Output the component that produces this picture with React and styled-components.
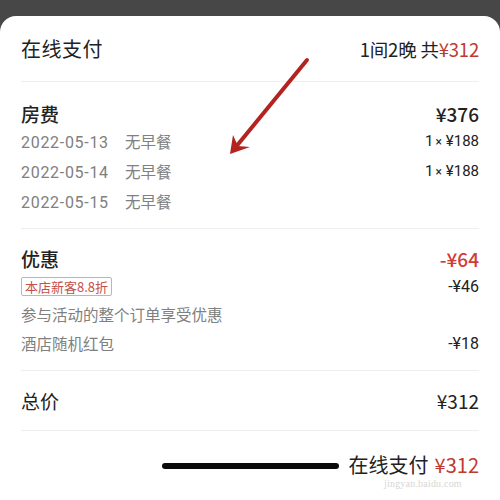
import styled, { createGlobalStyle } from 'styled-components'

const Global = createGlobalStyle`
  html, body {
    margin: 0;
    padding: 0;
    background: #474747;
  }
  body {
    font-family: "Noto Sans CJK SC", "Noto Sans", sans-serif;
    color: #222;
  }
`

const Screen = styled.div`
  position: relative;
  width: 500px;
  height: 500px;
  overflow: hidden;
  padding-top: 16px;
  box-sizing: border-box;
`

const Sheet = styled.div`
  height: 484px;
  background: #fff;
  border-radius: 16px 16px 0 0;
  padding: 0 21px 0 21px;
  box-sizing: border-box;
`

const Header = styled.div`
  height: 65px;
  display: flex;
  align-items: center;
  justify-content: space-between;
`

const HeaderTitle = styled.div`
  font-size: 20px;
  letter-spacing: 0.5px;
`

const HeaderSummary = styled.div`
  font-size: 18.5px;
  letter-spacing: -0.2px;
`

const Red = styled.span`
  color: #c0392f;
`

const Divider = styled.div`
  height: 1px;
  background: #eeeeee;
`

const Section = styled.div`
  padding: ${p => p.$pad || '18px 0 12px'};
`

const TitleRow = styled.div`
  height: 26px;
  display: flex;
  align-items: center;
  justify-content: space-between;
  font-size: 19px;
  font-weight: ${p => p.$light ? 400 : 500};
`

const Amount = styled.span`
  font-size: 19px;
  font-weight: ${p => p.$light ? 400 : 500};
  color: ${p => p.$red ? '#cf3b36' : '#222'};
`

const Row = styled.div`
  height: ${p => p.$h || 30}px;
  display: flex;
  align-items: center;
  justify-content: space-between;
`

const Gray = styled.span`
  font-size: 15.5px;
  color: #808080;
`

const DateText = styled.span`
  display: inline-block;
  width: 104px;
  font-size: 16px;
  letter-spacing: 0.7px;
  font-family: "Roboto", "Noto Sans", sans-serif;
`

const Price = styled.span`
  font-size: ${p => p.$size || 15}px;
  color: #222;
  font-family: "Roboto", "Noto Sans CJK SC", sans-serif;
`

const Times = styled.span`
  font-size: 12px;
  margin: 0 4px 0 2px;
`

const Tag = styled.span`
  display: inline-block;
  font-size: 13px;
  line-height: 17px;
  padding: 0 3px;
  color: #c4504a;
  border: 1px solid #d8aaa6;
  border-radius: 2px;
`

const TotalRow = styled.div`
  height: 59px;
  display: flex;
  align-items: center;
  justify-content: space-between;
`

const Footer = styled.div`
  height: 68px;
  display: flex;
  align-items: center;
  justify-content: flex-end;
  gap: 6px;
  font-size: 20px;
  line-height: 20px;
`

const Arrow = styled.svg`
  position: absolute;
  left: 0;
  top: 0;
  pointer-events: none;
`

const HomeBar = styled.div`
  position: absolute;
  left: 162px;
  top: 463px;
  width: 177px;
  height: 6px;
  border-radius: 3px;
  background: #0a0a0a;
`

const Watermark = styled.div`
  position: absolute;
  left: 384px;
  top: 478px;
  font-size: 10px;
  line-height: 11px;
  font-family: "Liberation Serif", serif;
  color: #d6d6d6;
  letter-spacing: 0.2px;
`

const nights = [
  { date: '2022-05-13', price: '¥188' },
  { date: '2022-05-14', price: '¥188' },
  { date: '2022-05-15' },
]

export default function App() {
  return (
    <Screen>
      <Global />
      <Sheet>
        <Header>
          <HeaderTitle>在线支付</HeaderTitle>
          <HeaderSummary>1间2晚 共<Red>¥312</Red></HeaderSummary>
        </Header>
        <Divider />
        <Section>
          <TitleRow>
            <span>房费</span>
            <Amount>¥376</Amount>
          </TitleRow>
          {nights.map(n => (
            <Row key={n.date}>
              <Gray><DateText>{n.date}</DateText>无早餐</Gray>
              {n.price && <Price>1<Times>×</Times>{n.price}</Price>}
            </Row>
          ))}
        </Section>
        <Divider />
        <Section $pad="16px 0 10px">
          <TitleRow>
            <span>优惠</span>
            <Amount $red>-¥64</Amount>
          </TitleRow>
          <Row $h={31}>
            <Tag>本店新客8.8折</Tag>
            <Price $size={16}>-¥46</Price>
          </Row>
          <Row $h={24}>
            <Gray>参与活动的整个订单享受优惠</Gray>
          </Row>
          <Row $h={34}>
            <Gray>酒店随机红包</Gray>
            <Price $size={16}>-¥18</Price>
          </Row>
        </Section>
        <Divider />
        <TotalRow>
          <TitleRow as="span" $light>总价</TitleRow>
          <Amount $light>¥312</Amount>
        </TotalRow>
        <Divider />
        <Footer>
          <span>在线支付</span>
          <Red>¥312</Red>
        </Footer>
      </Sheet>
      <Arrow width="500" height="500" viewBox="0 0 500 500">
        <line x1="307" y1="60" x2="235" y2="148" stroke="#b3231f" strokeWidth="4" strokeLinecap="round" />
        <path d="M230 154 L233 135 L238 146 L250 147 Z" fill="#b3231f" />
      </Arrow>
      <HomeBar />
      <Watermark>jingyan.baidu.com</Watermark>
    </Screen>
  )
}
